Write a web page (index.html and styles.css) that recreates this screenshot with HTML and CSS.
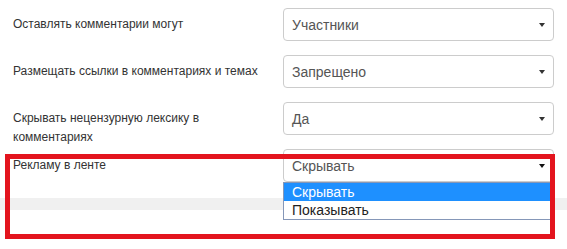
FILE: index.html
```html
<!DOCTYPE html>
<html lang="ru">

<head>
  <meta charset="UTF-8" />
  <title>Настройки сообщества</title>
  <link rel="stylesheet" href="styles.css">
</head>

<body>
  <div class="settings">
    <!-- Comments -->
    <div class="row">
      <label class="row-label">Оставлять комментарии могут</label>
      <div class="select">
        <span>Участники</span>
        <svg class="caret" width="6" height="4" viewBox="0 0 6 4"><path d="M0 0h6L3 4z" /></svg>
      </div>
    </div>

    <div class="row">
      <label class="row-label">Размещать ссылки в комментариях и темах</label>
      <div class="select">
        <span>Запрещено</span>
        <svg class="caret" width="6" height="4" viewBox="0 0 6 4"><path d="M0 0h6L3 4z" /></svg>
      </div>
    </div>

    <div class="row">
      <label class="row-label">Скрывать нецензурную лексику в комментариях</label>
      <div class="select">
        <span>Да</span>
        <svg class="caret" width="6" height="4" viewBox="0 0 6 4"><path d="M0 0h6L3 4z" /></svg>
      </div>
    </div>

    <!-- Ads (open dropdown) -->
    <div class="row">
      <label class="row-label">Рекламу в ленте</label>
      <div class="select open">
        <span>Скрывать</span>
        <svg class="caret" width="6" height="4" viewBox="0 0 6 4"><path d="M0 0h6L3 4z" /></svg>
        <ul class="options">
          <li class="selected">Скрывать</li>
          <li>Показывать</li>
        </ul>
      </div>
    </div>
  </div>

  <div class="band"></div>

  <div class="highlight"></div>
</body>

</html>
```

FILE: styles.css
```css
body {
  font-family: "Liberation Sans", Arial, sans-serif;
  background-color: white;
  color: #333;
  margin: 0;
  position: relative;
  height: 249px;
  overflow: hidden;
}

.settings {
  padding: 8px 13px 0;
  display: grid;
  row-gap: 14px;
}

.row {
  display: grid;
  grid-template-columns: 1fr 271px;
  column-gap: 15px;
  align-items: start;
  height: 33px;
}

.row-label {
  font-size: 12px;
  line-height: 19px;
  padding-top: 7px;
  padding-right: 10px;
  color: #333;
}

.select {
  position: relative;
  height: 33px;
  box-sizing: border-box;
  border: 1px solid #ccc;
  border-radius: 4px;
  padding: 0 8px;
  display: flex;
  align-items: center;
  justify-content: space-between;
  font-size: 14px;
  color: #555;
}

.caret {
  fill: #333;
}

.select.open .caret {
  fill: #111;
}

.options {
  position: absolute;
  left: -1px;
  right: -1px;
  top: 32px;
  margin: 0;
  padding: 0;
  list-style: none;
  background: white;
  border: 1px solid #8597b8;
  z-index: 2;
}

.options li {
  height: 18px;
  line-height: 18px;
  padding: 0 8px;
  font-size: 14px;
  color: #222;
}

.options li.selected {
  background: #1e90ff;
  color: white;
}

.band {
  margin-top: 16px;
  height: 12px;
  background: #f0f0f0;
}

.highlight {
  position: absolute;
  left: 5px;
  top: 154px;
  width: 550px;
  height: 85px;
  box-sizing: border-box;
  border: 5px solid #e3141e;
  z-index: 3;
}
```
